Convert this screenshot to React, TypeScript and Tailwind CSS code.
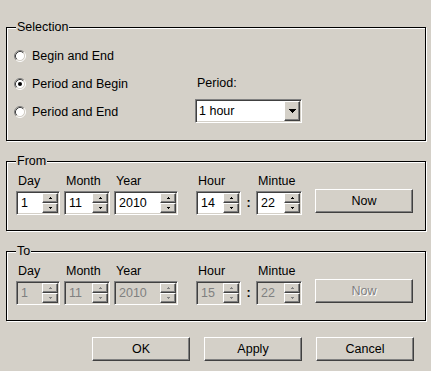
import React from "react";

const raised =
  "border border-t-white border-l-white border-r-[#404040] border-b-[#404040] shadow-[inset_-1px_-1px_0_#808080] bg-[#d4d0c8]";
const sunken =
  "border border-t-[#808080] border-l-[#808080] border-r-white border-b-white shadow-[inset_1px_1px_0_#404040,inset_-1px_-1px_0_#d4d0c8] p-[1px]";

function Radio({ checked }: { checked?: boolean }) {
  return (
    <svg width="12" height="12" viewBox="0 0 12 12">
      <circle cx="6" cy="6" r="4.5" fill="#fff" />
      <path d="M2.11 9.89 A5.5 5.5 0 0 1 9.89 2.11" stroke="#808080" fill="none" />
      <path d="M9.89 2.11 A5.5 5.5 0 0 1 2.11 9.89" stroke="#fff" fill="none" />
      <path d="M2.82 9.18 A4.5 4.5 0 0 1 9.18 2.82" stroke="#404040" fill="none" />
      <path d="M9.18 2.82 A4.5 4.5 0 0 1 2.82 9.18" stroke="#d4d0c8" fill="none" />
      {checked && <circle cx="6" cy="6" r="2" fill="#000" />}
    </svg>
  );
}

function Arrow({ up, color }: { up?: boolean; color: string }) {
  return (
    <svg width="3" height="2" viewBox="0 0 3 2" shapeRendering="crispEdges">
      {up ? (
        <>
          <rect x="1" y="0" width="1" height="1" fill={color} />
          <rect x="0" y="1" width="3" height="1" fill={color} />
        </>
      ) : (
        <>
          <rect x="0" y="0" width="3" height="1" fill={color} />
          <rect x="1" y="1" width="1" height="1" fill={color} />
        </>
      )}
    </svg>
  );
}

function Spin({ value, disabled }: { value: string; disabled?: boolean }) {
  const c = disabled ? "#808080" : "#000";
  return (
    <div className={`${sunken} mt-[2px] h-[24px] flex ${disabled ? "bg-[#d4d0c8]" : "bg-white"}`}>
      <div className={`flex-1 flex items-center pl-[3px] ${disabled ? "text-[#808080]" : ""}`}>{value}</div>
      <div className="w-[16px] flex flex-col">
        <div className={`${raised} h-[10px] flex items-center justify-center`}>
          <Arrow up color={c} />
        </div>
        <div className={`${raised} h-[10px] flex items-center justify-center`}>
          <Arrow color={c} />
        </div>
      </div>
    </div>
  );
}

function Field({ label, value, w, disabled }: { label: string; value: string; w: string; disabled?: boolean }) {
  return (
    <div className={`flex flex-col ${w}`}>
      <span className="pl-[2px]">{label}</span>
      <Spin value={value} disabled={disabled} />
    </div>
  );
}

function DateRow({ title, d, m, y, h, min, disabled }: {
  title: string; d: string; m: string; y: string; h: string; min: string; disabled?: boolean;
}) {
  return (
    <fieldset className="ml-[6px] mt-[13px] w-[420px] border border-black shadow-[1px_1px_0_#fff,inset_1px_1px_0_#fff]">
      <legend className="ml-[9px] px-[1px] bg-[#d4d0c8]">{title}</legend>
      <div className="flex items-end pl-[9px] pt-[5px] pb-[15px]">
        <Field label="Day" value={d} w="w-[44px]" disabled={disabled} />
        <div className="ml-[4px]">
          <Field label="Month" value={m} w="w-[46px]" disabled={disabled} />
        </div>
        <div className="ml-[4px]">
          <Field label="Year" value={y} w="w-[64px]" disabled={disabled} />
        </div>
        <div className="ml-[18px]">
          <Field label="Hour" value={h} w="w-[45px]" disabled={disabled} />
        </div>
        <div className="w-[15px] h-[24px] flex items-center justify-center font-bold">:</div>
        <Field label="Mintue" value={min} w="w-[46px]" disabled={disabled} />
        <button
          className={`${raised} ml-[13px] mb-[2px] w-[98px] h-[24px] ${disabled ? "text-[#808080] [text-shadow:1px_1px_0_#fff]" : ""}`}
        >
          Now
        </button>
      </div>
    </fieldset>
  );
}

export default function App() {
  return (
    <div className="w-[431px] h-[371px] bg-[#d4d0c8] pt-[20px] text-[12.5px] leading-[15px] text-black font-['Liberation_Sans',Arial,sans-serif]">
      <fieldset className="ml-[6px] w-[420px] border border-black shadow-[1px_1px_0_#fff,inset_1px_1px_0_#fff]">
        <legend className="ml-[9px] px-[1px] bg-[#d4d0c8]">Selection</legend>
        <div className="flex pl-[7px] pt-[7px] pb-[14px]">
          <div className="w-[181px] flex flex-col">
            <label className="h-[28px] flex items-center gap-[6px]">
              <Radio />
              Begin and End
            </label>
            <label className="h-[28px] flex items-center gap-[6px]">
              <Radio checked />
              Period and Begin
            </label>
            <label className="h-[28px] flex items-center gap-[6px]">
              <Radio />
              Period and End
            </label>
          </div>
          <div className="flex flex-col pt-[34px]">
            <span className="pl-[2px]">Period:</span>
            <div className={`${sunken} mt-[8px] w-[107px] h-[24px] bg-white flex`}>
              <div className="flex-1 flex items-center pl-[2px]">1 hour</div>
              <div className={`${raised} w-[16px] flex items-center justify-center`}>
                <svg width="7" height="4" viewBox="0 0 7 4" shapeRendering="crispEdges">
                  <rect x="0" y="0" width="7" height="1" fill="#000" />
                  <rect x="1" y="1" width="5" height="1" fill="#000" />
                  <rect x="2" y="2" width="3" height="1" fill="#000" />
                  <rect x="3" y="3" width="1" height="1" fill="#000" />
                </svg>
              </div>
            </div>
          </div>
        </div>
      </fieldset>

      <DateRow title="From" d="1" m="11" y="2010" h="14" min="22" />
      <DateRow title="To" d="1" m="11" y="2010" h="15" min="22" disabled />

      <div className="mt-[16px] flex justify-end gap-[14px] pr-[17px]">
        <button className={`${raised} w-[98px] h-[24px]`}>OK</button>
        <button className={`${raised} w-[98px] h-[24px]`}>Apply</button>
        <button className={`${raised} w-[98px] h-[24px]`}>Cancel</button>
      </div>
    </div>
  );
}
